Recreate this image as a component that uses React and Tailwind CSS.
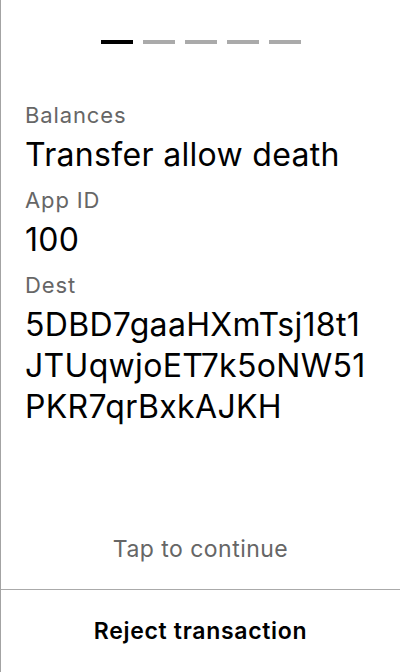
export default function App() {
  const steps = [0, 1, 2, 3, 4];
  const fields = [
    { label: "Balances", value: "Transfer allow death" },
    { label: "App ID", value: "100" },
    { label: "Dest", value: "5DBD7gaaHXmTsj18t1JTUqwjoET7k5oNW51PKR7qrBxkAJKH" },
  ];

  return (
    <div
      className="flex h-[672px] w-[400px] flex-col border-l border-[#a3a3a3] bg-white text-black"
      style={{ fontFamily: "Inter, 'Noto Sans', sans-serif" }}
    >
      {/* step indicator */}
      <div className="flex justify-center gap-[10px] pt-10">
        {steps.map((s) => (
          <div
            key={s}
            className={`h-1 w-8 ${s === 0 ? "bg-black" : "bg-[#aaaaaa]"}`}
          />
        ))}
      </div>

      {/* fields */}
      <div className="flex flex-1 flex-col gap-[9px] px-6 pt-[55px]">
        {fields.map((f) => (
          <div key={f.label}>
            <div className="text-[22px] leading-[32px] tracking-[0.04em] text-[#666666]">
              {f.label}
            </div>
            <div className="mt-[3px] max-w-[341px] break-all text-[32px] leading-[41px] tracking-[0.01em]">
              {f.value}
            </div>
          </div>
        ))}
      </div>

      <div className="pb-[26px] text-center text-[23px] leading-[28px] tracking-[0.02em] text-[#666666]">
        Tap to continue
      </div>

      <div className="flex h-[83px] items-center justify-center border-t border-[#aaaaaa]">
        <span className="text-[23px] font-semibold tracking-[0.03em]">Reject transaction</span>
      </div>
    </div>
  );
}
